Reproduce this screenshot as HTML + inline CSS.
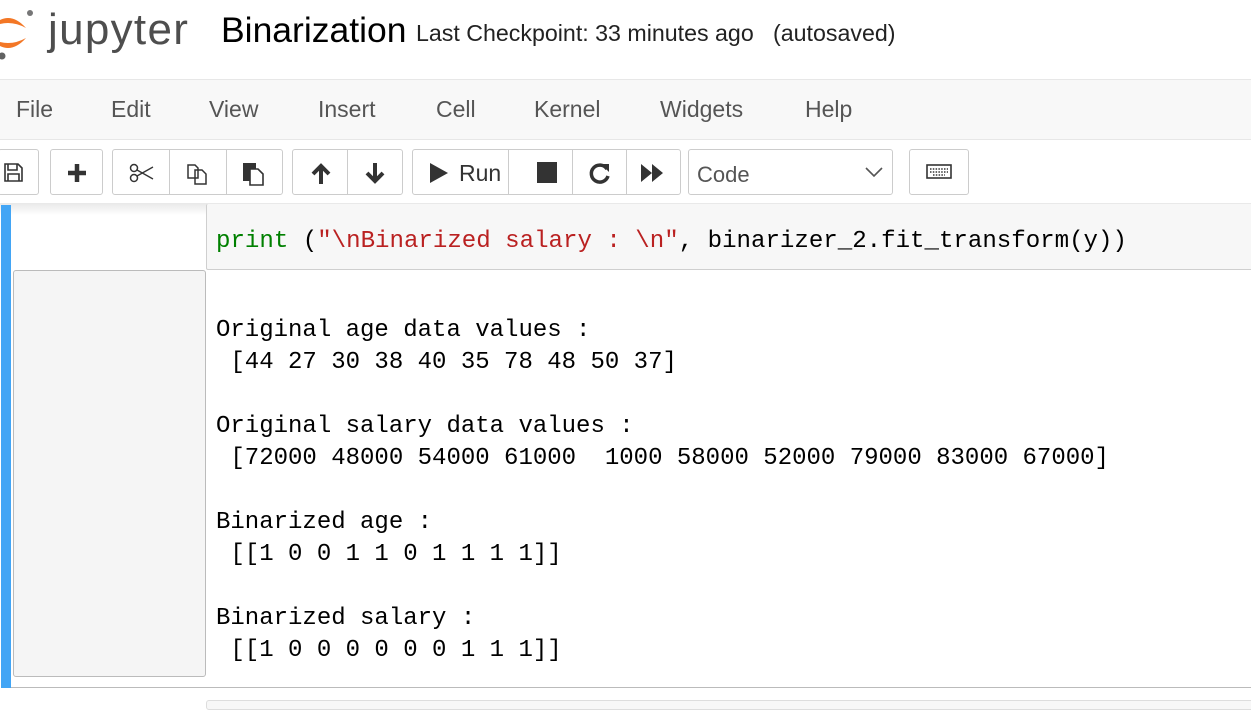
<!DOCTYPE html>
<html><head><meta charset="utf-8"><style>
*{margin:0;padding:0;box-sizing:border-box}
body{width:1251px;height:703px;overflow:hidden;background:#fff;font-family:"Liberation Sans",sans-serif;position:relative;color:#000}
.a{position:absolute}
.menu{left:-1px;top:79px;width:1253px;height:61px;background:#f8f8f8;border-top:1px solid #e7e7e7;border-bottom:1px solid #e7e7e7}
.mi{position:absolute;top:96px;font-size:23px;color:#555}
.btn{position:absolute;top:149px;height:46px;border:1px solid #ccc;border-radius:3px;background:#fff}
.dv{position:absolute;top:0;bottom:0;width:1px;background:#ccc}
.mono{font-family:"Liberation Mono",monospace;font-size:24px;white-space:pre}
</style></head><body>
<!-- logo -->
<svg class="a" style="left:-12px;top:4px" width="50" height="58" viewBox="0 0 50 58">
<path d="M2 24 Q20 4 38 24 Q20 14 2 24Z" fill="#f37726"/>
<path d="M2 34 Q20 54 38 34 Q20 44 2 34Z" fill="#f37726"/>
<circle cx="42" cy="9" r="3" fill="#767677"/>
<circle cx="14" cy="52" r="3.5" fill="#616262"/>
</svg>
<div class="a" style="left:48px;top:5px;font-size:44px;color:#4e4e4e;letter-spacing:1.3px">jupyter</div>
<div class="a" style="left:221px;top:10px;font-size:35.5px">Binarization</div>
<div class="a" style="left:416px;top:20px;font-size:23.2px;color:#222;white-space:pre">Last Checkpoint: 33 minutes ago   (autosaved)</div>

<div class="a menu"></div>
<div class="mi" style="left:16px">File</div>
<div class="mi" style="left:111px">Edit</div>
<div class="mi" style="left:209px">View</div>
<div class="mi" style="left:318px">Insert</div>
<div class="mi" style="left:436px">Cell</div>
<div class="mi" style="left:534px">Kernel</div>
<div class="mi" style="left:660px">Widgets</div>
<div class="mi" style="left:805px">Help</div>

<div class="btn" style="left:-2px;width:41px"><svg class="a" style="left:5px;top:13px" width="19" height="19" viewBox="0 0 19 19"><path d="M1 1H14L18 5V18H1Z M4 1V7H13V1 M4 18V11H15V18" fill="none" stroke="#333" stroke-width="1.6"/></svg></div>
<div class="btn" style="left:50px;width:53px"><svg class="a" style="left:16px;top:13px" width="20" height="20"><path d="M10 1V19M1 10H19" stroke="#333" stroke-width="4.5"/></svg></div>
<div class="btn" style="left:112px;width:171px"><div class="dv" style="left:56px"></div><div class="dv" style="left:113px"></div>
<svg class="a" style="left:16px;top:12px" width="26" height="22"><circle cx="5" cy="6" r="3.5" fill="none" stroke="#333" stroke-width="1.5"/><circle cx="5" cy="16" r="3.5" fill="none" stroke="#333" stroke-width="1.5"/><path d="M8 8L24 17M8 14L24 5" stroke="#333" stroke-width="1.3"/></svg>
<svg class="a" style="left:72px;top:12px" width="26" height="24"><path d="M3 3H10L13 6V16H3Z M10 8H17L21 12V22H10Z" fill="#fff" stroke="#333" stroke-width="1.5"/></svg>
<svg class="a" style="left:129px;top:11px" width="26" height="26"><path d="M1 2H14V20H1Z" fill="#333"/><path d="M8 8H16L21 13V24H8Z" fill="#fff" stroke="#333" stroke-width="1.6"/></svg></div>
<div class="btn" style="left:292px;width:111px"><div class="dv" style="left:54px"></div>
<svg class="a" style="left:17px;top:13px" width="22" height="22"><path d="M11 21V4M3 11L11 3L19 11" fill="none" stroke="#333" stroke-width="4"/></svg>
<svg class="a" style="left:71px;top:12px" width="22" height="22"><path d="M11 1V18M3 11L11 19L19 11" fill="none" stroke="#333" stroke-width="4"/></svg></div>
<div class="btn" style="left:412px;width:269px"><div class="dv" style="left:95px"></div><div class="dv" style="left:159px"></div><div class="dv" style="left:213px"></div>
<svg class="a" style="left:16px;top:12px" width="20" height="22"><path d="M1 1L19 11L1 21Z" fill="#333"/></svg>
<div class="a" style="left:46px;top:10px;font-size:23px;color:#333">Run</div>
<div class="a" style="left:124px;top:12px;width:20px;height:21px;background:#333"></div>
<svg class="a" style="left:175px;top:11px" width="24" height="24"><path d="M19 8A8.5 8.5 0 1 0 20 15" fill="none" stroke="#333" stroke-width="3.5"/><path d="M13 3H21V11Z" fill="#333"/></svg>
<svg class="a" style="left:227px;top:13px" width="26" height="20"><path d="M1 1L12 10L1 19ZM12 1L23 10L12 19Z" fill="#333"/></svg></div>
<div class="btn" style="left:688px;width:205px"><div class="a" style="left:8px;top:12px;font-size:22px;color:#555">Code</div>
<svg class="a" style="left:176px;top:16px" width="18" height="12"><path d="M1 2L9 10L17 2" fill="none" stroke="#555" stroke-width="1.6"/></svg></div>
<div class="btn" style="left:909px;width:60px"><svg class="a" style="left:16px;top:14px" width="26" height="16"><rect x="1" y="1" width="24" height="13" fill="none" stroke="#333" stroke-width="1.6"/><path d="M4 5H22M4 8H22M7 11H19" stroke="#333" stroke-width="1.4" stroke-dasharray="1.5 1.3"/></svg></div>

<div class="a" style="left:0;top:203px;width:1251px;height:12px;background:linear-gradient(#e8e8e8,#fff)"></div>
<div class="a" style="left:1px;top:205px;width:10px;height:483px;background:#42a5f5"></div>
<div class="a" style="left:11px;top:687px;width:1240px;height:1px;background:#bbb"></div>
<div class="a" style="left:206px;top:204px;width:1050px;height:66px;background:#f7f7f7;border:1px solid #cfcfcf;border-radius:2px;border-top:none"></div>
<div class="a mono" style="left:216px;top:228px;font-size:24.1px"><span style="color:#008000">print</span> (<span style="color:#ba2121">"\nBinarized salary : \n"</span>, binarizer_2.fit_transform(y))</div>
<div class="a" style="left:13px;top:270px;width:193px;height:407px;background:#f5f5f5;border:1px solid #bbb;border-radius:3px"></div>
<div class="a mono" style="left:216px;top:283px;line-height:32px">
Original age data values :
 [44 27 30 38 40 35 78 48 50 37]

Original salary data values :
 [72000 48000 54000 61000  1000 58000 52000 79000 83000 67000]

Binarized age :
 [[1 0 0 1 1 0 1 1 1 1]]

Binarized salary :
 [[1 0 0 0 0 0 0 1 1 1]]</div>
<div class="a" style="left:206px;top:700px;width:1050px;height:10px;border:1px solid #ddd;border-radius:3px;background:#f7f7f7"></div>
</body></html>
